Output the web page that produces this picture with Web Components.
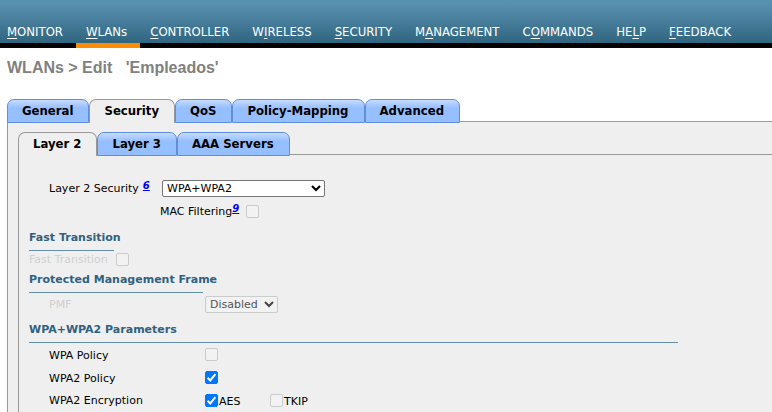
<!DOCTYPE html>
<html lang="en">
<head>
<meta charset="utf-8">
<meta name="viewport" content="width=device-width, initial-scale=1">
<title>WLANs &gt; Edit</title>
<style>
  html { height: 100%; }
  body { margin: 0; min-height: 100%; display: flex; background: #fff; }
</style>
</head>
<body>
<wlan-page></wlan-page>

<script>
const define = (name, html, setup) => {
  const template = document.createElement('template');
  template.innerHTML = html;
  customElements.define(name, class extends HTMLElement {
    connectedCallback() {
      if (this.shadowRoot) return;
      const root = this.attachShadow({ mode: 'open' });
      root.append(template.content.cloneNode(true));
      if (setup) setup(this, root);
    }
  });
};

define('main-nav', `
  <style>
    :host { display: block; background: linear-gradient(#5890b0 0, #5890b0 4px, #30657f 43px, #000 43px); }
    nav { display: flex; height: 48px; margin-left: -3px; }
  </style>
  <nav aria-label="Main"><slot></slot></nav>`);

define('nav-item', `
  <style>
    :host { display: flex; }
    a { box-sizing: border-box; padding: 22px 13px 0 10px; border-bottom: 5px solid transparent; color: #fff;
        font: 13px/20px "DejaVu Sans Condensed", "DejaVu Sans", sans-serif; font-stretch: condensed;
        text-decoration: none; white-space: nowrap; }
    :host([current]) a { border-color: #ff8c00; }
    ::slotted(u) { text-underline-offset: 2px; }
  </style>
  <a href="#"><slot></slot></a>`, (host, root) => {
    if (host.hasAttribute('current')) root.querySelector('a').setAttribute('aria-current', 'page');
  });

define('tab-strip', `
  <style>
    :host { display: flex; flex-direction: column; flex: 1; }
    [role=tablist] { display: flex; position: relative; margin-bottom: -2px; }
    section { flex: 1; display: flex; flex-direction: column; background: #efefef;
              border: solid #999; border-width: 1px 0 0 1px; }
  </style>
  <div role="tablist"><slot name="tab"></slot></div>
  <section><slot></slot></section>`);

define('tab-button', `
  <style>
    :host { display: block; }
    button { display: block; height: 24px; padding: 0 15px 0 14px; border: 1px solid #5f8fd8; border-radius: 7px 7px 0 0;
             background: linear-gradient(#c6dcff, #96bfff 8px); color: #000; white-space: nowrap;
             font: bold 13px/22px "DejaVu Sans Condensed", "DejaVu Sans", sans-serif; font-stretch: condensed; }
    :host([selected]) button { background: #efefef; border-color: #999; border-bottom: 0; padding-bottom: 1px; }
  </style>
  <button type="button" role="tab"><slot></slot></button>`, (host, root) => {
    root.querySelector('button').setAttribute('aria-selected', host.hasAttribute('selected'));
  });

define('section-title', `
  <style>
    :host { display: block; max-width: 100%; padding-bottom: 4px; border-bottom: 1px solid #628eaa; }
    h2 { margin: 0; color: #30617f; font: bold 11px/16px "DejaVu Sans", sans-serif; white-space: nowrap; }
  </style>
  <h2><slot></slot></h2>`);

define('foot-note', `
  <style>
    a { color: #00f; font: italic bold 10px/12px "DejaVu Sans", sans-serif; position: relative; top: -3px; }
  </style>
  <a href="#"><slot></slot></a>`);

define('check-field', `
  <style>
    :host { display: flex; align-items: center; min-height: var(--row, 23px); padding-left: var(--indent, 20px); }
    :host([trailing]) { flex-direction: row-reverse; justify-content: flex-end; gap: 1px; }
    .caption { display: flex; align-items: center; box-sizing: border-box; width: var(--label, 156px);
               padding-top: 2px; line-height: 14px; white-space: nowrap; }
    :host([muted]) .caption { color: #d0d0d0; }
    input { appearance: none; box-sizing: border-box; flex: none; width: 13px; height: 13px; margin: 0;
            border: 1px solid #767676; border-radius: 2px; background: #fff; }
    input:disabled { border-color: #cbcbcb; background: #f2f2f2; }
    input:checked { border-color: #0075ff; background: #0075ff; }
    .box { display: grid; }
    .box > * { grid-area: 1 / 1; }
    svg { width: 13px; height: 13px; pointer-events: none; }
    input:not(:checked) + svg { display: none; }
  </style>
  <span class="caption"><label for="box"><slot></slot></label><slot name="note"></slot></span>
  <span class="box">
    <input id="box" type="checkbox">
    <svg viewBox="0 0 13 13" aria-hidden="true"><path d="M2.6 6.8 5.2 9.4 10.4 3.2" fill="none" stroke="#fff" stroke-width="2"/></svg>
  </span>`, (host, root) => {
    const box = root.querySelector('input');
    box.checked = host.hasAttribute('checked');
    box.disabled = host.hasAttribute('disabled');
  });

define('select-field', `
  <style>
    :host { display: flex; align-items: center; min-height: var(--row, 22px); padding-left: 20px; }
    .caption { display: flex; align-items: center; gap: 4px; width: var(--label, 156px);
               padding-top: 2px; line-height: 14px; white-space: nowrap; }
    :host([muted]) .caption { color: #d0d0d0; }
    .box { display: grid; align-items: center; justify-items: end; width: var(--control, 73px); }
    .box > * { grid-area: 1 / 1; }
    select { appearance: none; box-sizing: border-box; width: 100%; height: 17px; margin: 0; padding: 0 16px 0 4px;
             border: 1px solid #767676; border-radius: 2px; background: #fff; color: #000; font: inherit; line-height: 15px; }
    select:disabled { border-color: #cbcbcb; background: #f2f2f2; color: #545454; opacity: 1; }
    svg { width: 10px; height: 8px; margin-right: 4px; pointer-events: none; }
    select:disabled + svg { color: #444; }
  </style>
  <span class="caption"><label for="list"><slot></slot></label><slot name="note"></slot></span>
  <span class="box">
    <select id="list"></select>
    <svg viewBox="0 0 10 8" aria-hidden="true"><path d="M1 2 5 6 9 2" fill="none" stroke="currentColor" stroke-width="2"/></svg>
  </span>`, (host, root) => {
    const list = root.querySelector('select');
    list.add(new Option(host.getAttribute('value')));
    list.disabled = host.hasAttribute('disabled');
  });

define('wlan-page', `
  <style>
    :host { flex: 1; min-width: 0; display: flex; flex-direction: column; color: #000;
            font: 11px/16px "DejaVu Sans", sans-serif; }
    h1 { margin: 0; padding: 8px 7px 0; height: 43px; color: #808080; white-space: pre;
         font: bold 16px/24px "Liberation Sans", Arial, sans-serif; }
    main { flex: 1; display: flex; flex-direction: column; }
    .outer { margin-left: 7px; }
    .inner { margin: 10px 0 0 10px; }
    form { padding: 20px 0 0 10px; }
    .security { --label: 113px; --control: 163px; --row: 26px; }
    .mac { --indent: 131px; --label: 86px; --row: 20px; }
    .fast { --indent: 0px; --label: 87px; --row: 16px; }
    .fast-title { width: 85px; margin-top: 9px; }
    .pmf-title { width: 174px; margin-top: 5px; }
    .wpa-title { width: 649px; margin-top: 7px; }
    .row { display: flex; align-items: center; min-height: 23px; padding-left: 20px; }
    .row > span { width: 156px; }
    .row check-field { --indent: 0px; --label: 51px; --row: 16px; }
  </style>
  <main-nav>
    <nav-item><u>M</u>ONITOR</nav-item>
    <nav-item current><u>W</u>LANs</nav-item>
    <nav-item><u>C</u>ONTROLLER</nav-item>
    <nav-item>W<u>I</u>RELESS</nav-item>
    <nav-item><u>S</u>ECURITY</nav-item>
    <nav-item>M<u>A</u>NAGEMENT</nav-item>
    <nav-item>C<u>O</u>MMANDS</nav-item>
    <nav-item>HE<u>L</u>P</nav-item>
    <nav-item><u>F</u>EEDBACK</nav-item>
  </main-nav>
  <main>
    <h1>WLANs &gt; Edit   'Empleados'</h1>
    <tab-strip class="outer">
      <tab-button slot="tab">General</tab-button>
      <tab-button slot="tab" selected>Security</tab-button>
      <tab-button slot="tab">QoS</tab-button>
      <tab-button slot="tab">Policy-Mapping</tab-button>
      <tab-button slot="tab">Advanced</tab-button>
      <tab-strip class="inner">
        <tab-button slot="tab" selected>Layer 2</tab-button>
        <tab-button slot="tab">Layer 3</tab-button>
        <tab-button slot="tab">AAA Servers</tab-button>
        <form>
          <select-field class="security" value="WPA+WPA2">Layer 2 Security<foot-note slot="note">6</foot-note></select-field>
          <check-field class="mac" disabled>MAC Filtering<foot-note slot="note">9</foot-note></check-field>
          <section-title class="fast-title">Fast Transition</section-title>
          <check-field class="fast" muted disabled>Fast Transition</check-field>
          <section-title class="pmf-title">Protected Management Frame</section-title>
          <select-field muted disabled value="Disabled">PMF</select-field>
          <section-title class="wpa-title">WPA+WPA2 Parameters</section-title>
          <check-field disabled>WPA Policy</check-field>
          <check-field checked>WPA2 Policy</check-field>
          <div class="row" role="group" aria-labelledby="encryption">
            <span id="encryption">WPA2 Encryption</span>
            <check-field trailing checked>AES</check-field>
            <check-field trailing disabled>TKIP</check-field>
          </div>
        </form>
      </tab-strip>
    </tab-strip>
  </main>`);
</script>
</body>
</html>
